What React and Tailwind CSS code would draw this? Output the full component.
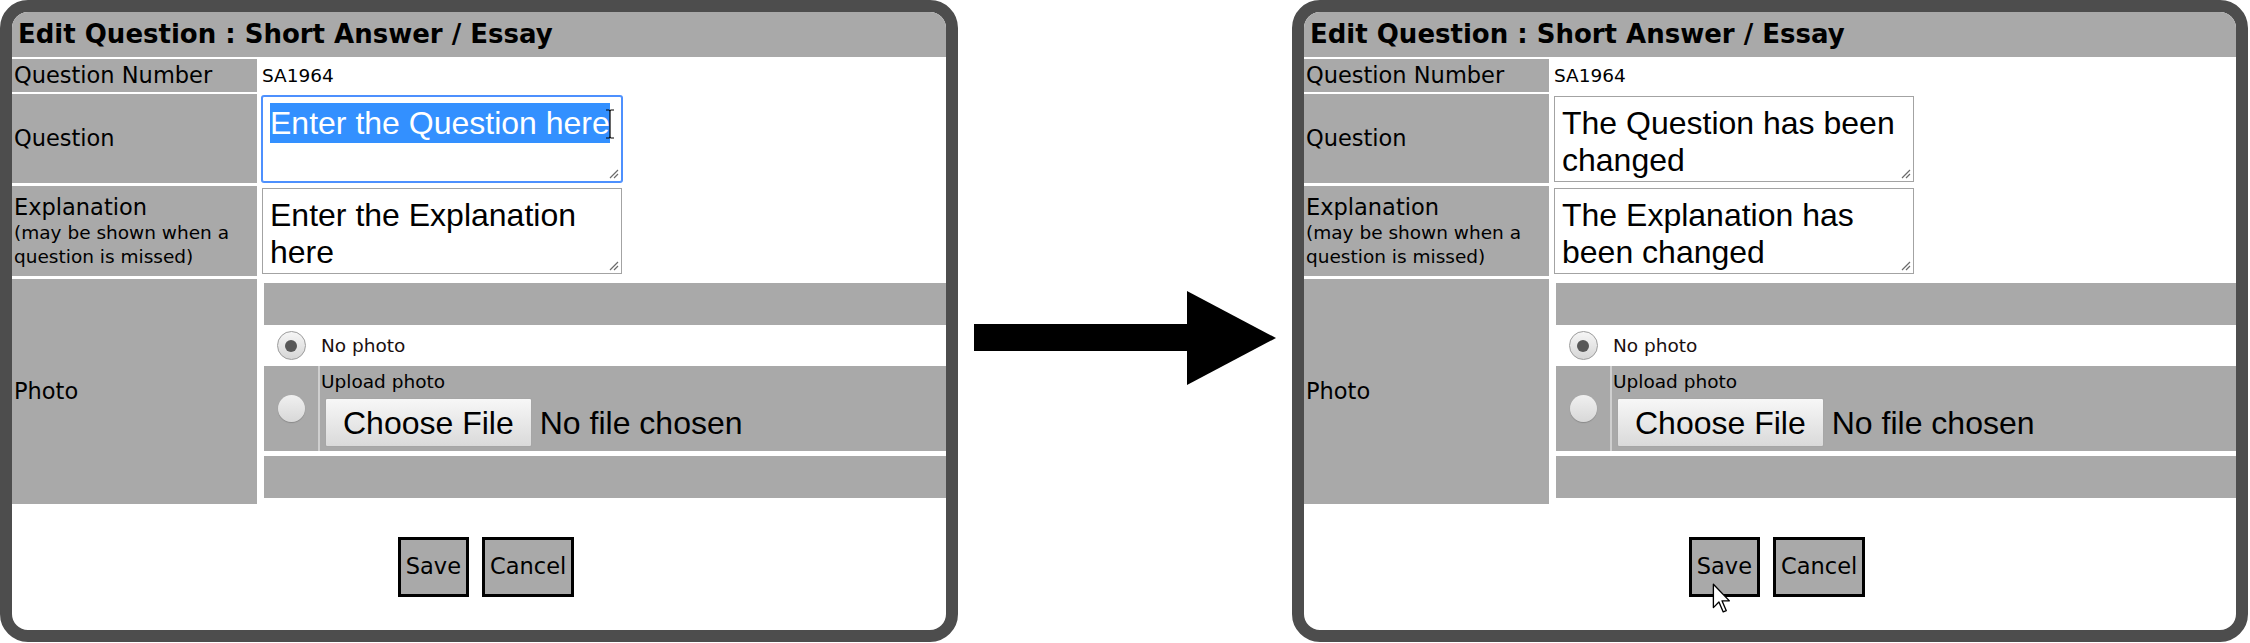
import React from 'react';

const Grip = () => (
    <svg className="absolute right-[2px] bottom-[2px]" width="11" height="11" viewBox="0 0 11 11">
        <path d="M10 2 L2 10 M10 6 L6 10" stroke="#6b6b6b" strokeWidth="1.2" />
    </svg>
);

const TextBox = ({ children, focused }) => (
    <div
        className={`relative w-[360px] h-[86px] bg-white border px-[7px] pt-[8px] text-[32px] leading-[37px] font-['Liberation_Sans',Arial,sans-serif] text-black ${
            focused ? 'border-[#4d90fe] ring-1 ring-[#4d90fe] rounded-[2px]' : 'border-[#a3a3a3]'
        }`}
    >
        {children}
        <Grip />
    </div>
);

const CheckedRadio = () => (
    <div className="w-[29px] h-[29px] rounded-full border border-[#9c9c9c] bg-linear-to-b from-[#f6f6f6] to-[#d6d6d6] flex items-center justify-center">
        <div className="w-[12px] h-[12px] rounded-full bg-[#575757]" />
    </div>
);

const EmptyRadio = () => (
    <div className="w-[27px] h-[27px] rounded-full bg-linear-to-b from-[#f0f0f0] to-[#d8d8d8] shadow-[0_1px_1px_#8a8a8a]" />
);

const Panel = ({ width, focused, question, explanation, pointer }) => (
    <div
        className={`relative shrink-0 h-[642px] border-[12px] border-[#4d4d4d] rounded-[28px] overflow-hidden bg-white flex flex-col ${width}`}
    >
        <div className="h-[45px] bg-[#a9a9a9] flex items-center pl-[6px] text-[26px] font-bold">
            Edit Question : Short Answer / Essay
        </div>

        <div className="flex h-[33px] mt-[2px]">
            <div className="w-[245px] bg-[#a9a9a9] flex items-center pl-[2px] text-[22.5px] leading-[27px]">
                Question Number
            </div>
            <div className="flex-1 ml-[5px] flex items-center text-[18.5px]">SA1964</div>
        </div>

        <div className="flex h-[89px] mt-[2px]">
            <div className="w-[245px] bg-[#a9a9a9] flex items-center pl-[2px] text-[22.5px] leading-[27px]">
                Question
            </div>
            <div className="flex-1 ml-[5px] pt-[2px]">
                <TextBox focused={focused}>{question}</TextBox>
            </div>
        </div>

        <div className="flex h-[90px] mt-[3px]">
            <div className="w-[245px] bg-[#a9a9a9] flex flex-col justify-center pl-[2px]">
                <div className="text-[22.5px] leading-[27px]">Explanation</div>
                <div className="text-[18.5px] leading-[24px]">
                    (may be shown when a
                    <br />
                    question is missed)
                </div>
            </div>
            <div className="flex-1 ml-[5px] pt-[2px]">
                <TextBox>{explanation}</TextBox>
            </div>
        </div>

        <div className="flex h-[225px] mt-[3px]">
            <div className="w-[245px] bg-[#a9a9a9] flex items-center pl-[2px] text-[22.5px] leading-[27px]">
                Photo
            </div>
            <div className="flex-1 ml-[7px] pt-[4px] flex flex-col">
                <div className="h-[42px] bg-[#a9a9a9]" />
                <div className="h-[41px] flex items-center">
                    <div className="w-[54px] flex justify-center">
                        <CheckedRadio />
                    </div>
                    <span className="ml-[3px] text-[18.5px] text-[#1a1010]">No photo</span>
                </div>
                <div className="h-[85px] bg-[#a9a9a9] flex">
                    <div className="w-[54px] flex items-center justify-center">
                        <EmptyRadio />
                    </div>
                    <div className="w-[2px] bg-[#cfcfcf]" />
                    <div className="pl-[1px] pt-[4px] flex flex-col">
                        <div className="text-[18.5px] leading-[24px]">Upload photo</div>
                        <div className="mt-[4px] ml-[4px] flex items-center font-['Liberation_Sans',Arial,sans-serif] text-[32px]">
                            <button className="h-[49px] px-[17px] border border-[#a6a6a6] rounded-[2px] bg-linear-to-b from-[#f7f7f7] to-[#dadada] leading-none text-black">
                                Choose File
                            </button>
                            <span className="ml-[8px]">No file chosen</span>
                        </div>
                    </div>
                </div>
                <div className="h-[42px] mt-[5px] bg-[#a9a9a9]" />
            </div>
        </div>

        <div className="mt-[33px] flex justify-center gap-[13px] pl-[14px] text-[22.5px]">
            <button className="h-[60px] px-[5px] border-[3px] border-black bg-[#a9a9a9]">Save</button>
            <button className="h-[60px] px-[5px] border-[3px] border-black bg-[#a9a9a9]">Cancel</button>
        </div>

        {focused && (
            <svg className="absolute left-[593px] top-[97px]" width="10" height="30" viewBox="0 0 10 30">
                <path d="M1 1 H4 Q5 1 5 3 Q5 1 6 1 H9 M5 3 V27 M1 29 H4 Q5 29 5 27 Q5 29 6 29 H9" stroke="#000" strokeWidth="1.2" fill="none" />
            </svg>
        )}

        {pointer && (
            <svg className="absolute left-[408px] top-[571px]" width="20" height="32" viewBox="0 0 16 26">
                <path d="M1 1 L1 20 L5.5 15.5 L9 23.5 L11.5 22.5 L8 14.5 L14 14.5 Z" fill="#fff" stroke="#000" strokeWidth="1.1" strokeLinejoin="round" />
            </svg>
        )}
    </div>
);

const App = () => (
    <div className="w-[2250px] h-[643px] bg-white flex items-start font-['DejaVu_Sans',sans-serif] text-black">
        <Panel
            width="w-[958px]"
            focused
            question={
                <span className="bg-[#3390ff] text-white whitespace-nowrap py-[2px]">Enter the Question here</span>
            }
            explanation="Enter the Explanation here"
        />
        <div className="w-[334px] shrink-0 h-[643px] flex items-center pl-[16px] pt-[34px]">
            <svg width="302" height="95" viewBox="0 0 302 95">
                <rect x="0" y="33" width="218" height="27" fill="#000" />
                <polygon points="213,0 302,47 213,94" fill="#000" />
            </svg>
        </div>
        <Panel
            width="w-[956px]"
            question="The Question has been changed"
            explanation="The Explanation has been changed"
            pointer
        />
    </div>
);

export default App;
